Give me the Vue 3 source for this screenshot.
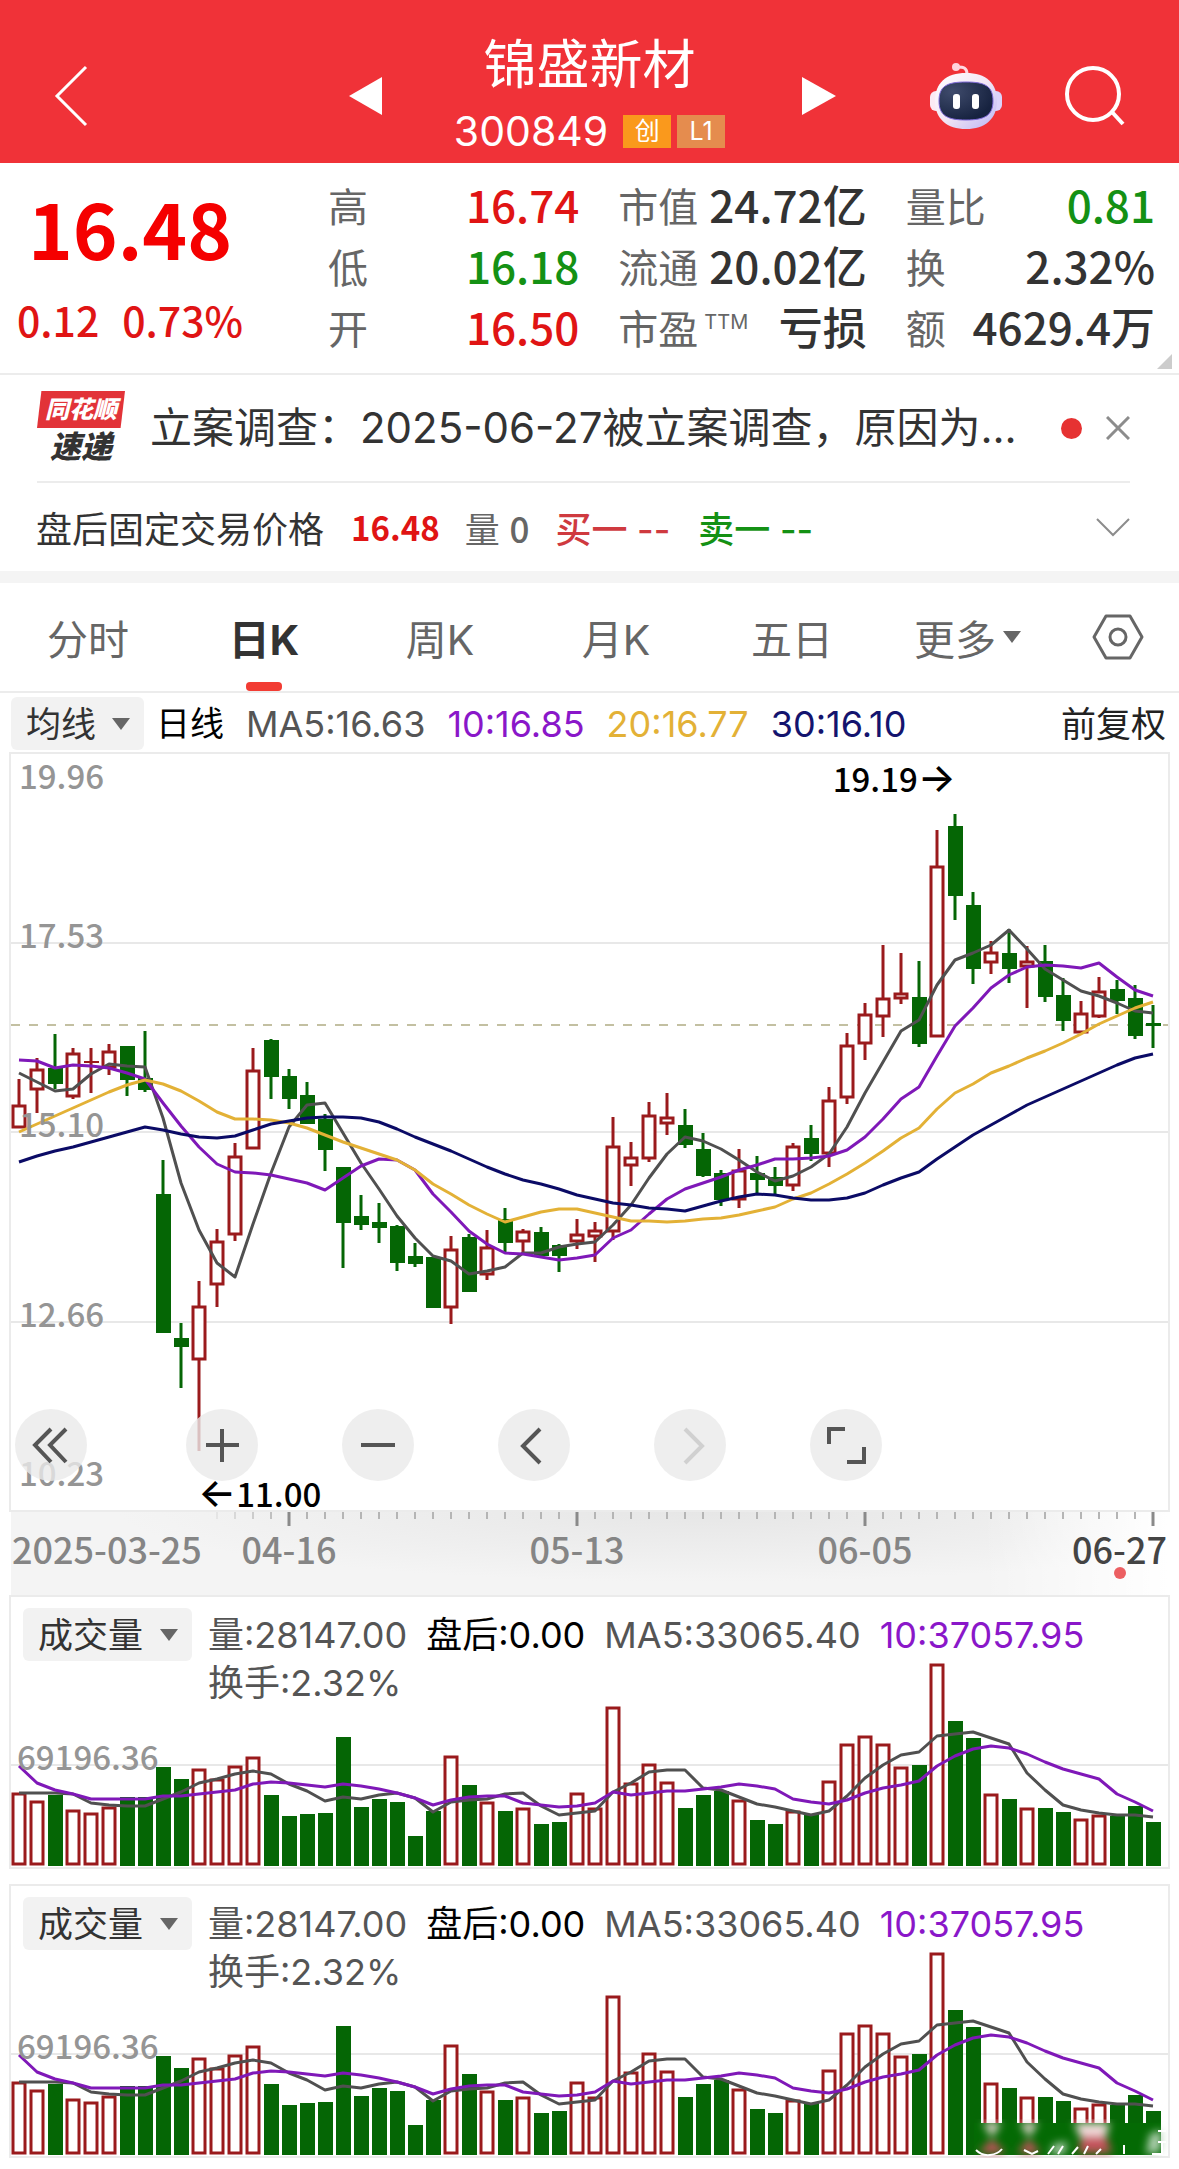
<script setup>
import { ref } from 'vue'

const stats = [
  { label: '高', value: '16.74', tone: 'up' },
  { label: '市值', value: '24.72亿' },
  { label: '量比', value: '0.81', tone: 'down' },
  { label: '低', value: '16.18', tone: 'down' },
  { label: '流通', value: '20.02亿' },
  { label: '换', value: '2.32%' },
  { label: '开', value: '16.50', tone: 'up' },
  { label: '市盈', note: 'TTM', value: '亏损' },
  { label: '额', value: '4629.4万' },
]

const tabs = ['分时', '日K', '周K', '月K', '五日']
const activeTab = ref('日K')
const overlay = ref('均线')
const indicators = ref(['成交量', '成交量'])

const STEP = 18
const BAR = 15
const cx = (i) => 19 + i * STEP

// direction, high, body top, body bottom, low
const candles = [
  ['r', 1078, 1104, 1127, 1127], ['r', 1057, 1068, 1089, 1112], ['g', 1033, 1067, 1083, 1088], ['r', 1047, 1052, 1096, 1098],
  ['r', 1047, 1060, 1062, 1092], ['r', 1043, 1050, 1067, 1074], ['g', 1045, 1045, 1079, 1095], ['g', 1030, 1077, 1089, 1091],
  ['g', 1159, 1193, 1332, 1332], ['g', 1322, 1337, 1346, 1387], ['r', 1280, 1305, 1359, 1450], ['r', 1228, 1240, 1284, 1306],
  ['r', 1142, 1155, 1234, 1240], ['r', 1047, 1069, 1148, 1148], ['g', 1038, 1039, 1076, 1098], ['g', 1068, 1075, 1098, 1108],
  ['g', 1081, 1094, 1123, 1123], ['g', 1113, 1118, 1149, 1170], ['g', 1166, 1166, 1222, 1267], ['g', 1194, 1215, 1224, 1229],
  ['g', 1202, 1221, 1227, 1242], ['g', 1224, 1225, 1262, 1270], ['g', 1242, 1255, 1263, 1266], ['g', 1256, 1256, 1307, 1307],
  ['r', 1235, 1248, 1307, 1323], ['g', 1233, 1236, 1291, 1291], ['r', 1229, 1246, 1274, 1279], ['g', 1207, 1218, 1242, 1251],
  ['r', 1228, 1230, 1241, 1252], ['g', 1226, 1231, 1255, 1255], ['g', 1243, 1244, 1255, 1271], ['r', 1218, 1233, 1241, 1248],
  ['r', 1221, 1229, 1236, 1261], ['r', 1116, 1145, 1231, 1239], ['r', 1141, 1156, 1165, 1185], ['r', 1101, 1114, 1158, 1161],
  ['r', 1092, 1116, 1123, 1134], ['g', 1108, 1124, 1144, 1147], ['g', 1132, 1148, 1175, 1176], ['g', 1169, 1172, 1199, 1205],
  ['r', 1148, 1169, 1199, 1207], ['g', 1155, 1172, 1179, 1192], ['g', 1166, 1176, 1185, 1193], ['r', 1142, 1145, 1185, 1190],
  ['g', 1124, 1137, 1153, 1160], ['r', 1086, 1099, 1153, 1166], ['r', 1032, 1044, 1097, 1103], ['r', 1002, 1013, 1043, 1059],
  ['r', 944, 997, 1016, 1036], ['r', 952, 992, 998, 1003], ['g', 960, 996, 1043, 1046], ['r', 829, 865, 1036, 1036],
  ['g', 813, 825, 895, 919], ['g', 891, 904, 968, 983], ['r', 940, 951, 962, 973], ['g', 928, 952, 968, 982],
  ['r', 945, 960, 966, 1007], ['g', 944, 960, 996, 1001], ['g', 977, 994, 1020, 1030], ['r', 1000, 1012, 1032, 1032],
  ['r', 976, 990, 1016, 1017], ['g', 979, 988, 1000, 1013], ['g', 984, 997, 1035, 1038], ['g', 1004, 1022, 1025, 1047],
]

const averages = [
  { color: '#505050', values: [1072, 1081, 1090, 1088, 1073, 1063, 1065, 1066, 1117, 1182, 1229, 1262, 1276, 1223, 1172, 1126, 1104, 1102, 1132, 1162, 1188, 1215, 1237, 1255, 1260, 1273, 1270, 1266, 1252, 1252, 1246, 1243, 1241, 1224, 1204, 1177, 1153, 1136, 1140, 1148, 1159, 1171, 1180, 1175, 1166, 1153, 1126, 1092, 1061, 1030, 1019, 984, 959, 952, 944, 929, 948, 968, 979, 990, 995, 1002, 1010, 1012] },
  { color: '#7f18b8', values: [1059, 1060, 1067, 1064, 1065, 1067, 1072, 1078, 1102, 1125, 1146, 1163, 1171, 1172, 1174, 1178, 1182, 1189, 1177, 1165, 1158, 1159, 1169, 1193, 1211, 1230, 1243, 1252, 1253, 1256, 1259, 1257, 1254, 1237, 1229, 1213, 1198, 1188, 1182, 1176, 1169, 1164, 1158, 1158, 1157, 1155, 1149, 1136, 1118, 1098, 1086, 1055, 1025, 1007, 987, 974, 966, 964, 965, 967, 962, 976, 989, 995] },
  { color: '#e3b136', values: [1131, 1123, 1115, 1107, 1099, 1091, 1084, 1079, 1083, 1090, 1100, 1111, 1118, 1118, 1119, 1122, 1127, 1134, 1141, 1147, 1153, 1159, 1169, 1183, 1193, 1204, 1213, 1221, 1216, 1211, 1208, 1208, 1212, 1216, 1220, 1220, 1221, 1220, 1218, 1217, 1214, 1210, 1206, 1198, 1192, 1183, 1173, 1162, 1150, 1137, 1127, 1108, 1092, 1083, 1072, 1065, 1057, 1050, 1042, 1033, 1023, 1015, 1007, 1001] },
  { color: '#0b0b66', values: [1161, 1155, 1150, 1146, 1141, 1136, 1131, 1126, 1129, 1133, 1136, 1137, 1135, 1129, 1123, 1120, 1117, 1116, 1116, 1117, 1121, 1128, 1136, 1143, 1150, 1158, 1166, 1173, 1179, 1183, 1188, 1194, 1198, 1202, 1204, 1207, 1208, 1210, 1205, 1200, 1196, 1193, 1194, 1197, 1199, 1199, 1197, 1192, 1184, 1177, 1171, 1158, 1146, 1134, 1124, 1114, 1104, 1096, 1088, 1080, 1072, 1064, 1057, 1053] },
]

const gridLines = [942, 1131, 1321]
const priceLabels = [['19.96', 788], ['17.53', 947], ['15.10', 1136], ['12.66', 1326], ['10.23', 1485]]

const volumes = [73, 65, 71, 56, 53, 59, 69, 69, 99, 87, 97, 87, 100, 109, 71, 50, 52, 53, 129, 59, 67, 64, 30, 55, 110, 81, 64, 55, 58, 42, 44, 73, 58, 159, 83, 102, 84, 58, 71, 75, 66, 46, 42, 55, 52, 85, 122, 130, 122, 99, 101, 202, 145, 128, 72, 67, 58, 58, 54, 47, 51, 50, 60, 44]
const volumeAverages = [
  { color: '#505050', values: [73, 73, 73, 72, 63, 61, 60, 60, 67, 74, 83, 87, 92, 95, 92, 82, 75, 65, 69, 67, 71, 73, 68, 54, 64, 66, 67, 72, 73, 60, 51, 53, 55, 74, 83, 94, 96, 96, 78, 76, 69, 62, 59, 55, 51, 55, 70, 88, 101, 111, 114, 130, 132, 134, 128, 122, 93, 76, 61, 56, 53, 51, 51, 49] },
  { color: '#7f18b8', values: [100, 83, 76, 72, 67, 67, 67, 67, 70, 70, 72, 74, 76, 82, 84, 83, 81, 79, 82, 80, 77, 73, 68, 61, 66, 69, 70, 70, 63, 61, 59, 60, 63, 74, 71, 73, 75, 75, 77, 79, 82, 80, 77, 67, 64, 62, 66, 73, 78, 81, 85, 100, 110, 117, 120, 118, 112, 104, 97, 92, 87, 72, 64, 55] },
]
const FLOOR = 269

const line = (values, y = (v) => v) => values.map((v, i) => `${cx(i)},${y(v)}`).join(' ')
const fromFloor = (v) => FLOOR - v

const ticks = Array.from({ length: 53 }, (_, k) => k + 11).map((i) => ({
  x: cx(i),
  major: (i + 1) % 16 === 0,
  opacity: Math.min(1, (i - 10) / 5),
}))
</script>

<template>
  <main class="page" lang="zh-CN">
    <header class="top">
      <button class="icon-btn back" aria-label="返回">
        <svg width="34" height="62" viewBox="0 0 34 62"><path d="M32 2 3 31l29 29" fill="none" stroke="#fff" stroke-width="3" /></svg>
      </button>
      <div class="stock">
        <button class="icon-btn" aria-label="上一只"><svg width="40" height="38" viewBox="0 0 40 38"><path d="M39 0v38L6 19z" fill="#fff" /></svg></button>
        <div class="stock-name">
          <h1>锦盛新材</h1>
          <div class="code"><span>300849</span><i class="tag">创</i><i class="tag level">L1</i></div>
        </div>
        <button class="icon-btn" aria-label="下一只"><svg width="40" height="38" viewBox="0 0 40 38"><path d="M5 0v38l34-19z" fill="#fff" /></svg></button>
      </div>
      <div class="tools">
        <button class="icon-btn" aria-label="智能助手">
          <svg width="72" height="68" viewBox="0 0 72 68">
            <defs>
              <linearGradient id="shell" x1="0" y1="0" x2="1" y2="1"><stop offset="0" stop-color="#fff" /><stop offset=".5" stop-color="#f3e6f5" /><stop offset="1" stop-color="#b9b4f5" /></linearGradient>
              <radialGradient id="face" cx=".25" cy=".25" r=".8"><stop offset="0" stop-color="#3f4b6c" /><stop offset="1" stop-color="#16223f" /></radialGradient>
            </defs>
            <path d="M37 12c0-6-3-7-10-7" fill="none" stroke="#ffd9e2" stroke-width="3" />
            <circle cx="26" cy="5" r="4" fill="#ffd3dc" />
            <rect x="0" y="29" width="14" height="20" rx="6" fill="#fbeaf4" />
            <rect x="58" y="29" width="14" height="20" rx="6" fill="#dcd3fa" />
            <path d="M36 11c20 0 31 10 31 28S55 67 36 67 5 57 5 39s11-28 31-28z" fill="url(#shell)" />
            <path d="M36 20c19 0 27 4 27 19s-9 19-27 19S9 54 9 39s8-19 27-19z" fill="url(#face)" stroke="#7d68d8" stroke-width="1" />
            <rect x="23" y="32" width="7" height="15" rx="3" fill="#fff" /><rect x="42" y="32" width="7" height="15" rx="3" fill="#fff" />
          </svg>
        </button>
        <button class="icon-btn" aria-label="搜索">
          <svg width="60" height="60" viewBox="0 0 60 60" fill="none" stroke="#fff" stroke-width="4"><circle cx="28" cy="28" r="26" /><path d="m47 46 11 12" /></svg>
        </button>
      </div>
    </header>

    <section class="summary">
      <div class="quote">
        <strong class="din">16.48</strong>
        <div class="change din"><span>0.12</span><span>0.73%</span></div>
      </div>
      <dl class="stats">
        <div v-for="s in stats" :key="s.label">
          <dt>{{ s.label }}<sup v-if="s.note">{{ s.note }}</sup></dt>
          <dd class="din" :class="s.tone">{{ s.value }}</dd>
        </div>
      </dl>
      <span class="corner"></span>
    </section>

    <section class="news">
      <div class="brand"><b>同花顺</b><em>速递</em></div>
      <a href="#news">立案调查：2025-06-27被立案调查，原因为...</a>
      <span class="dot"></span>
      <button class="icon-btn" aria-label="关闭"><svg width="24" height="24" viewBox="0 0 24 24"><path d="m1 1 22 22M23 1 1 23" stroke="#8c8c8c" stroke-width="3" /></svg></button>
    </section>

    <section class="after">
      <span>盘后固定交易价格</span>
      <b class="din up">16.48</b>
      <span class="muted">量 <span class="din">0</span></span>
      <span class="buy">买一 --</span>
      <span class="sell">卖一 --</span>
      <button class="icon-btn" aria-label="展开"><svg width="34" height="20" viewBox="0 0 34 20"><path d="m1 2 16 16L33 2" fill="none" stroke="#8c8c8c" stroke-width="2" /></svg></button>
    </section>

    <nav class="tabs">
      <button v-for="t in tabs" :key="t" :class="{ active: t === activeTab }" @click="activeTab = t">{{ t }}</button>
      <button>更多<svg class="more" width="20" height="12" viewBox="0 0 20 12"><path d="M1 0h18l-9 12z" fill="#666" /></svg></button>
      <button class="gear" aria-label="设置">
        <svg width="52" height="46" viewBox="0 0 52 46" fill="none" stroke="#666" stroke-width="3"><path d="M14 2h24l12 21-12 21H14L2 23z" stroke-linejoin="round" /><circle cx="26" cy="23" r="8" /></svg>
      </button>
    </nav>

    <div class="legend">
      <span class="picker"><select v-model="overlay" aria-label="主图指标"><option>均线</option></select></span>
      <span class="ink">日线</span>
      <span class="gray">MA5:16.63</span>
      <span class="violet">10:16.85</span>
      <span class="gold">20:16.77</span>
      <span class="navy">30:16.10</span>
      <button class="adjust">前复权</button>
    </div>

    <section class="chart">
      <svg class="plot" viewBox="11 753 1157 756">
        <path v-for="y in gridLines" :key="y" :d="`M11 ${y}H1168`" stroke="#e8e8e8" stroke-width="2" />
        <path d="M11 1024H1168" stroke="#c3c0a2" stroke-width="2" stroke-dasharray="9 9" />
        <g v-for="([d, high, top, bottom, low], i) in candles" :key="i" :class="d">
          <path :d="`M${cx(i)} ${high}V${top}M${cx(i)} ${bottom}V${low}`" stroke-width="3" />
          <rect v-if="d === 'r' && bottom - top > 3" :x="cx(i) - 6" :y="top + 1" :width="BAR - 3" :height="bottom - top - 2" fill="#fff" stroke-width="3" />
          <rect v-else class="solid" :x="cx(i) - 7" :y="top" :width="BAR" :height="bottom - top" />
        </g>
        <polyline v-for="a in averages" :key="a.color" :points="line(a.values)" :stroke="a.color" fill="none" stroke-width="3" stroke-linejoin="round" />
        <text v-for="[t, y] in priceLabels" :key="t" class="din axis" x="19" :y="y">{{ t }}</text>
        <text class="din mark" x="956" y="791" text-anchor="end">19.19<tspan class="arrow">→</tspan></text>
        <text class="din mark" x="198" y="1506"><tspan class="arrow">←</tspan>11.00</text>
      </svg>
      <div class="controls">
        <button aria-label="收起"><svg viewBox="0 0 72 72"><path d="M36 20 20 36l16 17M51 20 35 36l16 17" /></svg></button>
        <button aria-label="放大"><svg viewBox="0 0 72 72"><path d="M36 20v33M20 36h33" /></svg></button>
        <button aria-label="缩小"><svg viewBox="0 0 72 72"><path d="M19 36h34" /></svg></button>
        <button aria-label="向左"><svg viewBox="0 0 72 72"><path d="M42 20 25 37l17 17" /></svg></button>
        <button aria-label="向右" disabled><svg viewBox="0 0 72 72"><path d="m31 20 17 17-17 17" /></svg></button>
        <button aria-label="全屏"><svg viewBox="0 0 72 72"><path d="M19 35V20h16M54 38v15H37" /></svg></button>
      </div>
    </section>

    <div class="dates">
      <svg class="plot" viewBox="11 1509 1157 85">
        <path v-for="t in ticks" :key="t.x" :d="`M${t.x} 1510v${t.major ? 15 : 8}`" :stroke="t.major ? '#8a8a8a' : '#b5b5b5'" :stroke-width="t.major ? 3 : 2" :opacity="t.opacity" />
        <text class="din date" x="12" y="1563">2025-03-25</text>
        <text class="din date" x="289" y="1563" text-anchor="middle">04-16</text>
        <text class="din date" x="577" y="1563" text-anchor="middle">05-13</text>
        <text class="din date" x="865" y="1563" text-anchor="middle">06-05</text>
        <text class="din date today" x="1167" y="1563" text-anchor="end">06-27</text>
        <circle cx="1120" cy="1572" r="6" fill="#ec5f62" />
      </svg>
    </div>

    <section v-for="(name, n) in indicators" :key="n" class="volume">
      <div class="legend">
        <span class="picker wide"><select v-model="indicators[n]" aria-label="副图指标"><option>成交量</option></select></span>
        <div class="readout">
          <span class="gray">量:28147.00</span>
          <span class="ink">盘后:0.00</span>
          <span class="gray">MA5:33065.40</span>
          <span class="violet">10:37057.95</span>
          <span class="gray turnover">换手:2.32%</span>
        </div>
      </div>
      <svg class="plot" viewBox="11 0 1157 270">
        <path d="M11 168H1168" stroke="#e8e8e8" stroke-width="2" />
        <g v-for="(v, i) in volumes" :key="i" :class="candles[i][0]">
          <rect v-if="candles[i][0] === 'r'" :x="cx(i) - 6" :y="FLOOR - v + 1" :width="BAR - 3" :height="v - 3" fill="#fff" stroke-width="3" />
          <rect v-else class="solid" :x="cx(i) - 7" :y="FLOOR - v" :width="BAR" :height="v" />
        </g>
        <polyline v-for="a in volumeAverages" :key="a.color" :points="line(a.values, fromFloor)" :stroke="a.color" fill="none" stroke-width="3" stroke-linejoin="round" />
        <text class="din axis" x="17" y="173">69196.36</text>
        <g v-if="n === 1">
          <defs><filter :id="`soft${n}`"><feGaussianBlur stdDeviation="4" /></filter></defs>
          <path d="M974 237h187v32H974z" fill="#046a04" />
          <g :filter="`url(#soft${n})`">
            <path d="M983 237h18l-9 14zM1020 237h18l-9 14zM1074 237h36l-6 18h-22z" fill="#f3dcdc" />
            <path d="M992 253l14 14h-28zM1029 253l12 14h-24zM1082 250h24l6 17h-34z" fill="#c4525c" />
            <path d="M1054 258l14-2-4 12h-14zM1150 248l12-4-2 22-14 2z" fill="#b5d3b5" />
          </g>
          <path d="M976 264q6 6 14 5t12-6M1024 264l8 4 6-3M1048 268l6-8M1058 268l5-8M1072 268l6-7M1084 268l4-8M1096 268l5-5M1124 268v-9M1152 268h10v-12M1158 245h8M1158 256h8" fill="none" stroke="#fff" stroke-width="2" />
        </g>
      </svg>
    </section>
  </main>
</template>

<style>
body { margin: 0; background: #fff; }
</style>

<style scoped>
.page { font-family: Inter, "Noto Sans CJK SC", sans-serif; color: #333; background: #fff; padding-bottom: 13px; overflow: hidden; }
button, select { font: inherit; color: inherit; border: 0; background: none; padding: 0; margin: 0; }
.din { font-family: "Noto Sans CJK SC", sans-serif; font-weight: 500; }
.icon-btn { display: flex; }
svg { display: block; }
.up { color: #e01414; }
.down { color: #149114; }

.top { display: grid; grid-template-columns: 1fr 494px 1fr; align-items: center; background: #f03238; color: #fff; padding: 33px 54px 4px; height: 126px; }
.stock { display: flex; justify-content: space-between; align-items: center; height: 126px; }
.stock-name { display: flex; flex-direction: column; align-items: center; gap: 12px; height: 126px; }
h1 { margin: 0; font-size: 53px; line-height: 64px; font-weight: 400; }
.code { display: flex; align-items: center; gap: 6px; font-size: 41px; line-height: 44px; }
.code span { margin-right: 9px; }
.tag { width: 48px; height: 33px; line-height: 33px; font-size: 25px; font-style: normal; text-align: center; background: #fa991c; }
.tag.level { background: #e58c4e; }
.tools { display: flex; justify-content: flex-end; align-items: center; gap: 63px; }

.summary { position: relative; display: flex; padding: 14px 24px 13px 0; border-bottom: 2px solid #ececec; }
.quote { width: 260px; margin-right: 68px; text-align: center; color: #e01414; }
.quote strong { display: block; font-size: 76px; line-height: 100px; font-weight: 700; color: #f50000; }
.change { display: flex; justify-content: center; gap: 23px; font-size: 41px; line-height: 48px; margin-top: 18px; }
.stats { flex: 1; margin: 0; display: grid; grid-template-columns: 251fr 248fr 249fr; column-gap: 39px; grid-auto-rows: 61px; align-items: center; }
.stats div { display: flex; justify-content: space-between; align-items: center; white-space: nowrap; line-height: 60px; }
dt { font-size: 40px; color: #666; }
sup { font-size: 20px; line-height: 0; margin-left: 6px; }
dd { margin: 0; padding-bottom: 6px; font-size: 44px; line-height: 55px; }
.corner { position: absolute; right: 7px; bottom: 4px; width: 15px; height: 15px; background: #ccc; clip-path: polygon(100% 0, 100% 100%, 0 100%); }

.news { display: flex; align-items: center; height: 106px; margin: 0 49px 0 37px; border-bottom: 2px solid #ececec; }
.brand { width: 88px; display: flex; flex-direction: column; align-items: center; line-height: 37px; }
.brand b { width: 88px; text-align: center; background: #e23338; color: #fff; font-size: 24px; font-weight: 900; font-style: italic; clip-path: polygon(5% 0, 100% 0, 95% 100%, 0 100%); }
.brand em { font-size: 31px; font-weight: 900; }
.news a { flex: 1; margin-left: 25px; font-size: 42px; line-height: 60px; color: inherit; text-decoration: none; white-space: nowrap; }
.dot { width: 21px; height: 21px; border-radius: 50%; background: #e63232; margin-right: 24px; }

.after { display: flex; align-items: center; height: 88px; padding: 0 49px 0 36px; font-size: 36px; border-bottom: 12px solid #f4f4f4; }
.after b { margin: 0 25px 0 27px; font-size: 33px; font-weight: 700; }
.after .muted { color: #666; margin-right: 26px; font-size: 35px; }
.buy { color: #cf3a3f; margin-right: 28px; font-weight: 500; }
.sell { color: #149114; font-weight: 500; }
.after .icon-btn { margin-left: auto; }

.tabs { display: grid; grid-template-columns: repeat(6, 176fr) 123fr; height: 108px; border-bottom: 2px solid #ececec; font-size: 41px; color: #666; }
.tabs button { position: relative; display: flex; align-items: center; justify-content: center; }
.tabs .active { color: #333; font-weight: 700; }
.tabs .active::after { content: ""; position: absolute; bottom: 0; width: 36px; height: 9px; border-radius: 4px; background: #f23c33; }
.more { margin-left: 6px; }

.legend { display: flex; align-items: center; gap: 22px; font-size: 36px; line-height: 48px; white-space: nowrap; }
.tabs + .legend { height: 61px; padding: 0 13px 0 11px; }
.picker { position: relative; background: #f2f2f2; border-radius: 6px; width: 133px; height: 53px; }
.picker select { appearance: none; width: 100%; height: 53px; padding: 0 0 0 15px; font-size: 35px; color: #333; }
.picker::after { content: ""; position: absolute; right: 14px; top: 21px; border: 9px solid transparent; border-top: 12px solid #666; border-bottom: 0; }
.picker.wide { width: 169px; }
.picker + .ink { margin-left: -10px; font-size: 34px; }
.ink { color: #000; }
.gray { color: #555; }
.violet { color: #8a17c9; }
.gold { color: #e3b136; }
.navy { color: #14146e; }
.adjust { margin-left: auto; color: #222; font-size: 35px; }

.chart { position: relative; margin: 0 11px; box-shadow: 0 0 0 2px #ebebeb; }
.plot { width: 100%; height: auto; overflow: visible; }
.r { stroke: #9a1a1c; fill: #9a1a1c; }
.r .solid { stroke: none; }
.g { stroke: #056605; fill: #056605; }
.g .solid { stroke: none; }
.axis { font-size: 33px; fill: #959595; }
.mark { font-size: 33px; fill: #000; }
.arrow { font-family: Inter, sans-serif; font-size: 40px; }
.controls { position: absolute; left: 4px; bottom: 29px; display: flex; gap: 84px; }
.controls button { width: 72px; height: 72px; border-radius: 50%; background: rgba(234, 234, 234, .8); }
.controls button:first-child { margin-right: 15px; }
.controls path { fill: none; stroke: #555; stroke-width: 4; }
.controls button:disabled path { stroke: #d0d0d0; }

.dates { margin: 0 11px; background: linear-gradient(90deg, transparent 84%, #fff), radial-gradient(ellipse at 60% 0, #e6e6e6, #f4f4f4 60%); }
.date { font-size: 36px; fill: #858585; }
.date.today { fill: #444; }

.volume { position: relative; margin: 2px 11px 19px; box-shadow: 0 0 0 2px #ebebeb; }
.volume:last-child { margin-bottom: 0; }
.volume .legend { position: absolute; left: 12px; top: 11px; align-items: flex-start; gap: 16px; }
.readout { display: grid; grid-template-columns: repeat(4, auto); column-gap: 19px; margin-top: 3px; }
.turnover { grid-column: 1 / -1; }
</style>
